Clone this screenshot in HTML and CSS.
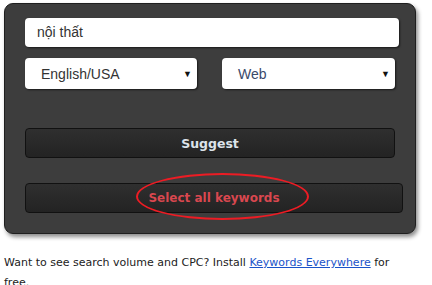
FILE: index.html
```html
<!DOCTYPE html>
<html>
<head>
<meta charset="utf-8">
<link rel="stylesheet" href="styles.css">
</head>
<body>
<div class="panel">
  <div class="field">nội thất</div>
  <div class="selects">
    <div class="select sel-lang"><span>English/USA</span><span class="arrow">▼</span></div>
    <div class="select sel-web"><span>Web</span><span class="arrow">▼</span></div>
  </div>
  <div class="btn btn-suggest">Suggest</div>
  <div class="btn btn-all">Select all keywords<span class="ring"></span></div>
</div>
<p class="note">Want to see search volume and CPC? Install <a href="#">Keywords Everywhere</a> for free.</p>
</body>
</html>
```
FILE: styles.css
```css
html, body { margin: 0; padding: 0; background: #fff; }
body { padding: 3px 0 0 4px; width: 428px; }
.panel {
  box-sizing: border-box;
  width: 412px;
  height: 231px;
  background: #3d3d3d;
  border: 1px solid #1f1f1f;
  border-radius: 9px;
  box-shadow: 2px 3px 4px rgba(0,0,0,0.45);
  padding: 14px 0 0 20px;
  font-family: "Liberation Sans", Arial, sans-serif;
}
.field {
  box-sizing: border-box;
  width: 374px;
  height: 29px;
  background: #fff;
  border-radius: 4px;
  box-shadow: 1px 1px 2px rgba(0,0,0,0.6);
  padding: 6px 0 0 12px;
  font-size: 14px;
  color: #333;
}
.selects { display: flex; gap: 25px; margin-top: 11px; }
.select {
  box-sizing: border-box;
  height: 31px;
  background: #fff;
  border-radius: 4px;
  box-shadow: 1px 1px 2px rgba(0,0,0,0.6);
  display: flex;
  align-items: center;
  justify-content: space-between;
  font-size: 14px;
  color: #333;
}
.sel-lang { width: 172px; padding: 0 5px 0 16px; }
.sel-web { width: 173px; padding: 0 5px 0 16px; color: #3a4a6a; }
.arrow { font-size: 9px; color: #111; }
.btn {
  box-sizing: border-box;
  height: 30px;
  border: 1px solid #111;
  border-radius: 4px;
  background: linear-gradient(#2f2f2f, #232323);
  display: flex;
  align-items: center;
  justify-content: center;
  font-family: "DejaVu Sans", Verdana, sans-serif;
  font-weight: bold;
  font-size: 12.5px;
  position: relative;
}
.btn-suggest { width: 370px; margin-top: 39px; color: #dde3ea; }
.btn-all { width: 378px; margin-top: 25px; color: #d9474f; font-size: 12px; }
.ring {
  position: absolute;
  left: 110px;
  top: -11px;
  width: 173px;
  height: 47px;
  border: 2.5px solid #ec1c24;
  border-radius: 50%;
  box-sizing: border-box;
}
.note {
  margin: 19px 0 0 0;
  font-family: "DejaVu Sans", Verdana, sans-serif;
  font-size: 11px;
  line-height: 20px;
  color: #222;
  width: 392px;
}
.note a { color: #1a53c9; }
```
